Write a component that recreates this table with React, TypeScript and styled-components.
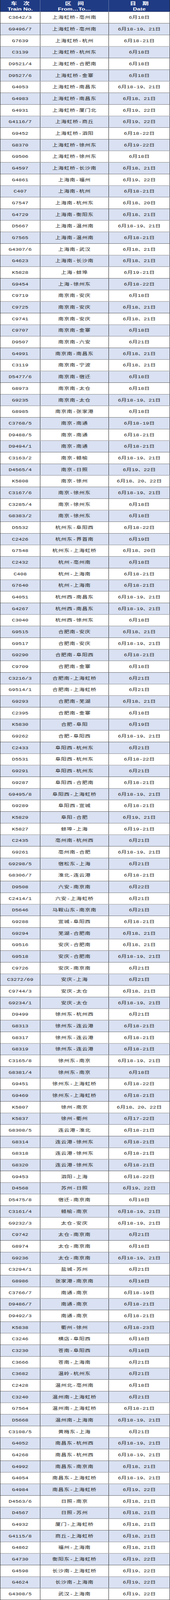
import { useEffect, useState } from 'react'
import styled, { createGlobalStyle } from 'styled-components'

const GlobalStyle = createGlobalStyle`
  html, body {
    margin: 0;
    padding: 0;
    background: #ffffff;
  }
`

// full height of the sheet in px: header 41 + 137 rows of 40
const SHEET_HEIGHT = 41 + 137 * 40

// the window can be shorter than the sheet; squeeze it to fit when it is
function useFitScale() {
  const read = () => Math.min(1, window.innerHeight / SHEET_HEIGHT)
  const [scale, setScale] = useState(read)
  useEffect(() => {
    const onResize = () => setScale(read())
    window.addEventListener('resize', onResize)
    return () => window.removeEventListener('resize', onResize)
  }, [])
  return scale
}

// code|route|date
const raw = `C3642/3|上海虹桥-亳州南|6月18日
G9496/7|上海虹桥-亳州南|6月18-19、21日
G7639|上海虹桥-杭州|6月18-21日
C3139|上海虹桥-杭州东|6月18日
D9521/4|上海虹桥-合肥南|6月18日
D9527/6|上海虹桥-金寨|6月18日
G4053|上海虹桥-南昌东|6月18-19、21日
G4983|上海虹桥-南昌东|6月18、21日
G4931|上海虹桥-厦门北|6月19、22日
G4116/7|上海虹桥-商丘|6月19、22日
G9452|上海虹桥-泗阳|6月18-22日
G8370|上海虹桥-徐州东|6月19-22日
G9506|上海虹桥-徐州东|6月18日
G4597|上海虹桥-长沙南|6月18、21日
G4861|上海南-福州|6月19、22日
C407|上海南-杭州|6月18-21日
G7547|上海南-杭州东|6月18、20日
G4729|上海南-衡阳东|6月18、21日
D5667|上海南-温州南|6月18-19、21日
G7565|上海南-温州南|6月18-21日
G4307/6|上海南-武汉|6月18、21日
G4623|上海南-长沙南|6月18、21日
K5828|上海-蚌埠|6月19-21日
G9454|上海-徐州东|6月18-22日
C9719|南京南-安庆|6月18日
C9725|南京南-安庆|6月18、21日
C9741|南京南-安庆|6月18、21日
C9707|南京南-金寨|6月18日
D9507|南京南-六安|6月21日
G4991|南京南-南昌东|6月18、21日
C3119|南京南-宁波|6月18、21日
D5477/6|南京南-宿迁|6月18日
G8973|南京南-太仓|6月18日
G9235|南京南-太仓|6月18-19、21日
G8985|南京南-张家港|6月18日
C3768/5|南京-南通|6月18-19日
D9488/5|南京-南通|6月18-21日
D9494/1|南京-南通|6月18-21日
C3163/2|南京-赣榆|6月18-19、21日
D4565/4|南京-日照|6月19、22日
K5808|南京-徐州|6月18、20、22日
C3167/6|南京-徐州东|6月18-19、21日
C3285/4|南京-徐州东|6月18日
G8383/2|南京-徐州东|6月18日
D5532|杭州东-阜阳西|6月18-22日
C2426|杭州东-界首南|6月19日
G7548|杭州东-上海虹桥|6月18、20日
C2432|杭州-亳州南|6月18日
C408|杭州-上海南|6月18-21日
G7640|杭州-上海南|6月18-21日
G4051|杭州西-南昌东|6月18-19、21日
G4267|杭州西-南昌东|6月18-19、21日
C3040|杭州西-徐州东|6月18日
G9515|合肥南-安庆|6月18、21日
G9517|合肥南-安庆|6月18-19、21日
G9290|合肥南-阜阳西|6月18-21日
C9709|合肥南-金寨|6月18日
C3216/3|合肥南-上海虹桥|6月21日
G9514/1|合肥南-上海虹桥|6月21日
G9293|合肥南-芜湖|6月18、21日
C2395|合肥南-金寨|6月18日
K5830|合肥-阜阳|6月19日
G9262|合肥-阜阳西|6月18-19、21日
C2433|阜阳西-杭州东|6月21日
D5531|阜阳西-杭州东|6月18-22日
G9291|阜阳西-杭州东|6月21日
G9287|阜阳西-合肥南|6月18-21日
G9495/8|阜阳西-上海虹桥|6月18-19、21日
G9289|阜阳西-宣城|6月18-21日
K5829|阜阳-合肥|6月19、21日
K5827|蚌埠-上海|6月19-21日
C2435|亳州南-杭州西|6月21日
G9261|亳州南-合肥|6月18-19、21日
G9298/5|宿松东-上海|6月21日
G8306/7|淮北-连云港|6月18-21日
D9508|六安-南京南|6月22日
C2414/1|六安-上海虹桥|6月21日
D5646|马鞍山东-南京南|6月21日
G9288|宣城-阜阳西|6月18-21日
G9294|芜湖-合肥南|6月18、21日
G9516|安庆-合肥南|6月18、21日
G9518|安庆-合肥南|6月18-19、21日
C9726|安庆-南京南|6月21日
C3272/69|安庆-上海|6月21日
C9744/3|安庆-太仓|6月18、21日
G9234/1|安庆-太仓|6月18-19、21日
D9499|徐州东-杭州西|6月21日
G8313|徐州东-连云港|6月18-21日
G8317|徐州东-连云港|6月18-21日
G8319|徐州东-连云港|6月18-21日
C3165/8|徐州东-南京|6月18-19、21日
G8381/4|徐州东-南京|6月18日
G9451|徐州东-上海虹桥|6月18-22日
G9469|徐州东-上海虹桥|6月18-21日
K5807|徐州-南京|6月18、20、22日
K5837|徐州-衢州|6月17-22日
G8308/5|连云港-淮北|6月18-21日
G8314|连云港-徐州东|6月18-21日
G8318|连云港-徐州东|6月18-21日
G8320|连云港-徐州东|6月18-21日
G9453|泗阳-上海|6月18-22日
D4568|苏州-日照|6月19、22日
D5475/8|宿迁-南京南|6月18日
C3161/4|赣榆-南京|6月18-19、21日
G9232/3|太仓-安庆|6月18-19、21日
C9742|太仓-南京南|6月21日
G8974|太仓-南京南|6月18日
G9236|太仓-南京南|6月18-19、21日
C3294/1|盐城-苏州|6月21日
G8986|张家港-南京南|6月18日
C3766/7|南通-南京|6月18-19日
D9486/7|南通-南京|6月18-21日
D9492/3|南通-南京|6月18-21日
K5838|衢州-徐州|6月18-23日
C3246|横店-阜阳西|6月18日
C3230|苍南-阜阳西|6月18日
C3666|苍南-上海南|6月21日
C3682|温岭-杭州东|6月21日
C2428|温州北-亳州南|6月18日
C3240|温州南-上海虹桥|6月21日
G7564|温州南-上海虹桥|6月18-21日
D5668|温州南-上海南|6月18-19、21日
C3108/5|黄梅东-上海|6月21日
G4052|南昌东-杭州西|6月18-19、21日
G4268|南昌东-杭州西|6月18-19、21日
G4992|南昌东-南京南|6月18、21日
G4054|南昌东-上海虹桥|6月18-19、21日
G4984|南昌东-上海虹桥|6月19、22日
D4563/6|日照-南京|6月18、21日
D4567|日照-苏州|6月18、21日
G4932|厦门-上海虹桥|6月18、21日
G4115/8|商丘-上海虹桥|6月18、21日
G4862|福州-上海南|6月18、21日
G4730|衡阳东-上海虹桥|6月19、22日
G4598|长沙南-上海虹桥|6月19、22日
G4624|长沙南-上海南|6月19、22日
G4308/5|武汉-上海南|6月19、22日`

const trains = raw.split('\n').map((line) => {
  const [code, route, date] = line.split('|')
  return { code, route, date }
})

const headers = [
  { zh: '车　次', en: 'Train No.' },
  { zh: '区　间', en: 'From…To…' },
  { zh: '日　期', en: 'Date' },
]

export default function App() {
  const scale = useFitScale()
  return (
    <>
      <GlobalStyle />
      <Frame style={{ height: SHEET_HEIGHT * scale }}>
        <Sheet style={{ transform: `scaleY(${scale})` }}>
          <HeadRow>
            {headers.map((h) => (
              <HeadCell key={h.en}>
                <HeadZh>{h.zh}</HeadZh>
                <HeadEn>{h.en}</HeadEn>
              </HeadCell>
            ))}
          </HeadRow>
          {trains.map((t, i) => (
            <Row key={t.code + i} $shaded={i % 2 === 1}>
              <Cell>{t.code}</Cell>
              <Cell $spaced>{t.route}</Cell>
              <Cell>{t.date}</Cell>
            </Row>
          ))}
        </Sheet>
      </Frame>
    </>
  )
}

const Frame = styled.div`
  width: 434px;
  overflow: hidden;
`

const Sheet = styled.div`
  display: flex;
  flex-direction: column;
  width: 434px;
  box-sizing: border-box;
  border-left: 1px solid #222;
  transform-origin: top left;
`

const HeadRow = styled.div`
  display: grid;
  grid-template-columns: 102px 175px 156px;
  flex: 0 0 41px;
  height: 41px;
  overflow: hidden;
  box-sizing: border-box;
  background: #1f3b84;
  border-bottom: 1px solid #222;
`

const HeadCell = styled.div`
  display: flex;
  flex-direction: column;
  align-items: center;
  padding-top: 1px;
  box-sizing: border-box;
  border-right: 1px solid rgba(255, 255, 255, 0.35);
  color: #ffffff;
  font-weight: bold;

  &:last-child {
    border-right-color: #222;
  }
`

const HeadZh = styled.div`
  font-family: "Noto Sans CJK SC", sans-serif;
  font-size: 16px;
  line-height: 20px;
`

const HeadEn = styled.div`
  font-family: "Liberation Sans", Arial, sans-serif;
  font-size: 15px;
  line-height: 19px;
`

const Row = styled.div<{ $shaded: boolean }>`
  display: grid;
  grid-template-columns: 102px 175px 156px;
  flex: 0 0 40px;
  height: 40px;
  overflow: hidden;
  box-sizing: border-box;
  border-bottom: 1px solid #222;
  background: ${(p) => (p.$shaded ? '#d9e1f2' : '#ffffff')};
`

const Cell = styled.div<{ $spaced?: boolean }>`
  display: flex;
  align-items: center;
  justify-content: center;
  height: 39px;
  box-sizing: border-box;
  border-right: 1px solid #222;
  color: #262626;
  font-family: "Liberation Mono", "Noto Sans CJK SC", monospace;
  font-size: 14px;
  line-height: 16px;
  letter-spacing: ${(p) => (p.$spaced ? '0.8px' : '0')};
  white-space: nowrap;
`
